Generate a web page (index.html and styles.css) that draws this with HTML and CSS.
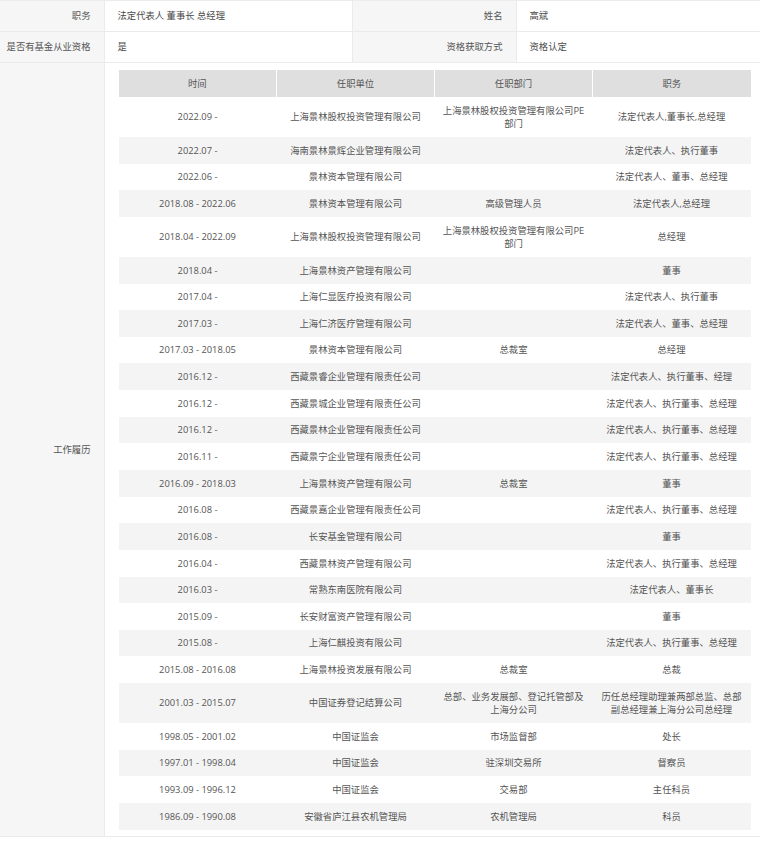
FILE: index.html
```html
<!DOCTYPE html>
<html lang="zh-CN">
<head>
<meta charset="utf-8">
<title>高管信息</title>
<link rel="stylesheet" href="styles.css">
</head>
<body>
<table class="info">
  <colgroup>
    <col class="c-label1">
    <col class="c-val1">
    <col class="c-label2">
    <col class="c-val2">
  </colgroup>
  <tr class="top">
    <th class="label">职务</th>
    <td class="value">法定代表人 董事长 总经理</td>
    <th class="label">姓名</th>
    <td class="value">高斌</td>
  </tr>
  <tr class="top">
    <th class="label">是否有基金从业资格</th>
    <td class="value">是</td>
    <th class="label">资格获取方式</th>
    <td class="value">资格认定</td>
  </tr>
  <tr>
    <th class="label">工作履历</th>
    <td class="value history" colspan="3">
      <table class="jobs">
        <thead>
          <tr><th>时间</th><th>任职单位</th><th>任职部门</th><th>职务</th></tr>
        </thead>
        <tbody>
          <tr><td>2022.09 -</td><td>上海景林股权投资管理有限公司</td><td>上海景林股权投资管理有限公司PE部门</td><td>法定代表人,董事长,总经理</td></tr>
          <tr><td>2022.07 -</td><td>海南景林景辉企业管理有限公司</td><td></td><td>法定代表人、执行董事</td></tr>
          <tr><td>2022.06 -</td><td>景林资本管理有限公司</td><td></td><td>法定代表人、董事、总经理</td></tr>
          <tr><td>2018.08 - 2022.06</td><td>景林资本管理有限公司</td><td>高级管理人员</td><td>法定代表人,总经理</td></tr>
          <tr><td>2018.04 - 2022.09</td><td>上海景林股权投资管理有限公司</td><td>上海景林股权投资管理有限公司PE部门</td><td>总经理</td></tr>
          <tr><td>2018.04 -</td><td>上海景林资产管理有限公司</td><td></td><td>董事</td></tr>
          <tr><td>2017.04 -</td><td>上海仁显医疗投资有限公司</td><td></td><td>法定代表人、执行董事</td></tr>
          <tr><td>2017.03 -</td><td>上海仁济医疗管理有限公司</td><td></td><td>法定代表人、董事、总经理</td></tr>
          <tr><td>2017.03 - 2018.05</td><td>景林资本管理有限公司</td><td>总裁室</td><td>总经理</td></tr>
          <tr><td>2016.12 -</td><td>西藏景睿企业管理有限责任公司</td><td></td><td>法定代表人、执行董事、经理</td></tr>
          <tr><td>2016.12 -</td><td>西藏景城企业管理有限责任公司</td><td></td><td>法定代表人、执行董事、总经理</td></tr>
          <tr><td>2016.12 -</td><td>西藏景林企业管理有限责任公司</td><td></td><td>法定代表人、执行董事、总经理</td></tr>
          <tr><td>2016.11 -</td><td>西藏景宁企业管理有限责任公司</td><td></td><td>法定代表人、执行董事、总经理</td></tr>
          <tr><td>2016.09 - 2018.03</td><td>上海景林资产管理有限公司</td><td>总裁室</td><td>董事</td></tr>
          <tr><td>2016.08 -</td><td>西藏景嘉企业管理有限责任公司</td><td></td><td>法定代表人、执行董事、总经理</td></tr>
          <tr><td>2016.08 -</td><td>长安基金管理有限公司</td><td></td><td>董事</td></tr>
          <tr><td>2016.04 -</td><td>西藏景林资产管理有限公司</td><td></td><td>法定代表人、执行董事、总经理</td></tr>
          <tr><td>2016.03 -</td><td>常熟东南医院有限公司</td><td></td><td>法定代表人、董事长</td></tr>
          <tr><td>2015.09 -</td><td>长安财富资产管理有限公司</td><td></td><td>董事</td></tr>
          <tr><td>2015.08 -</td><td>上海仁麒投资有限公司</td><td></td><td>法定代表人、执行董事、总经理</td></tr>
          <tr><td>2015.08 - 2016.08</td><td>上海景林投资发展有限公司</td><td>总裁室</td><td>总裁</td></tr>
          <tr><td>2001.03 - 2015.07</td><td>中国证券登记结算公司</td><td>总部、业务发展部、登记托管部及上海分公司</td><td>历任总经理助理兼两部总监、总部副总经理兼上海分公司总经理</td></tr>
          <tr><td>1998.05 - 2001.02</td><td>中国证监会</td><td>市场监督部</td><td>处长</td></tr>
          <tr><td>1997.01 - 1998.04</td><td>中国证监会</td><td>驻深圳交易所</td><td>督察员</td></tr>
          <tr><td>1993.09 - 1996.12</td><td>中国证监会</td><td>交易部</td><td>主任科员</td></tr>
          <tr><td>1986.09 - 1990.08</td><td>安徽省庐江县农机管理局</td><td>农机管理局</td><td>科员</td></tr>
        </tbody>
      </table>
    </td>
  </tr>
</table>
</body>
</html>
```

FILE: styles.css
```css
html, body {
  margin: 0;
  padding: 0;
  background: #ffffff;
}

body {
  font-family: "Open Sans", "Noto Sans CJK SC", sans-serif;
  font-size: 9.33px;
  line-height: 13.33px;
  color: #555555;
}

.info {
  width: 760px;
  border-collapse: collapse;
  table-layout: fixed;
  border-top: 1px solid #ececec;
}

.c-label1 { width: 104px; }
.c-val1 { width: 248px; }
.c-label2 { width: 164px; }
.c-val2 { width: 244px; }

.info > tbody > tr > th,
.info > tbody > tr > td {
  border: 1px solid #ebebeb;
  border-top: 0;
}

.info > tbody > tr > th:first-child,
.info > tbody > tr > td:first-child {
  border-left: 0;
}

.top {
  height: 31px;
}

.info th.label {
  background: #f6f6f6;
  font-weight: normal;
  text-align: right;
  padding: 0 13px 0 0;
  color: #555555;
  vertical-align: middle;
}

.info td.value {
  text-align: left;
  padding: 0 0 0 13px;
  color: #4a4a4a;
  vertical-align: middle;
}

.info td.history {
  padding: 7px 10px 6px 14px;
}

.jobs {
  width: 632px;
  border-collapse: collapse;
  table-layout: fixed;
}

.jobs th {
  background: #dfdfdf;
  font-weight: normal;
  color: #555555;
  height: 27px;
  padding: 0 6px;
  border-left: 1px solid #ffffff;
  text-align: center;
  vertical-align: middle;
  box-sizing: border-box;
}

.jobs th:first-child {
  border-left: 0;
}

.jobs td {
  padding: 6.67px 6px;
  text-align: center;
  vertical-align: middle;
  color: #555555;
}

.jobs tbody tr:nth-child(even) td {
  background: #f4f4f4;
}
```
